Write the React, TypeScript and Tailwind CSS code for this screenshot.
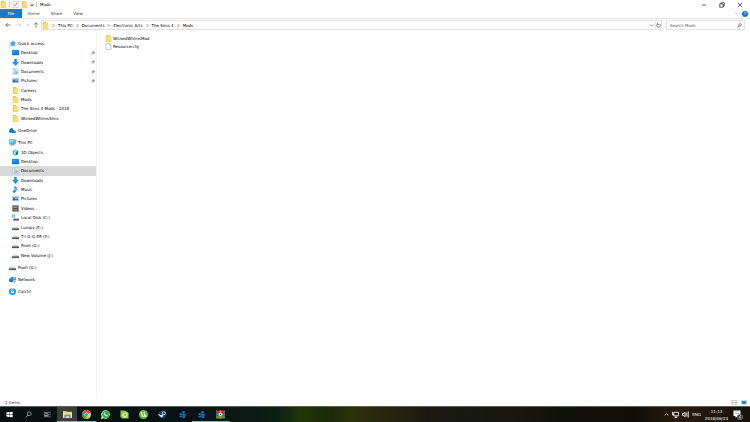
import type { ReactNode } from 'react'

type IconName =
  | 'star'
  | 'desktop'
  | 'download'
  | 'document'
  | 'pictures'
  | 'folder'
  | 'onedrive'
  | 'pc'
  | 'objects'
  | 'music'
  | 'videos'
  | 'osdisk'
  | 'drive'
  | 'network'
  | 'catch'
  | 'file'

interface NavItem {
  label: string
  icon: IconName
  pinned?: boolean
  selected?: boolean
}

const quickAccess: NavItem[] = [
  { label: 'Desktop', icon: 'desktop', pinned: true },
  { label: 'Downloads', icon: 'download', pinned: true },
  { label: 'Documents', icon: 'document', pinned: true },
  { label: 'Pictures', icon: 'pictures', pinned: true },
  { label: 'Careers', icon: 'folder' },
  { label: 'Mods', icon: 'folder' },
  { label: 'The Sims 4 Mods - 2018', icon: 'folder' },
  { label: 'WickedWhimsSims', icon: 'folder' },
]

const thisPc: NavItem[] = [
  { label: '3D Objects', icon: 'objects' },
  { label: 'Desktop', icon: 'desktop' },
  { label: 'Documents', icon: 'document', selected: true },
  { label: 'Downloads', icon: 'download' },
  { label: 'Music', icon: 'music' },
  { label: 'Pictures', icon: 'pictures' },
  { label: 'Videos', icon: 'videos' },
  { label: 'Local Disk (C:)', icon: 'osdisk' },
  { label: 'Lumpy (E:)', icon: 'drive' },
  { label: 'T-I-G-G-ER (F:)', icon: 'drive' },
  { label: 'Pooh (G:)', icon: 'drive' },
  { label: 'New Volume (J:)', icon: 'drive' },
]

const crumbs = ['This PC', 'Documents', 'Electronic Arts', 'The Sims 4', 'Mods']

const files: { name: string; icon: IconName }[] = [
  { name: 'WickedWhimsMod', icon: 'folder' },
  { name: 'Resource.cfg', icon: 'file' },
]

// All glyphs are drawn on a 16 x 16 grid.
const glyphs: Record<IconName, ReactNode> = {
  star: (
    <>
      <path d="M9 1l2 4.6 4.6.4-3.5 3.2 1 4.8L9 11.500l-4 2.500 1-4.800L3 6.200l4.300-.6z" fill="#2a9fe8" stroke="#2a9fe8" />
      <path d="M1 8h4M0 11h5M2 14h3" stroke="#6cc0f2" strokeWidth="1.5" />
    </>
  ),
  desktop: (
    <>
      <rect x="0" y="2" width="16" height="12" fill="#0a8de8" />
      <path d="M0 12h16v2H0z" fill="#0b6fc2" />
      <path d="M2 4h7L2 10z" fill="#35a9f5" />
    </>
  ),
  download: <path d="M5 0h6v7h5l-8 9-8-9h5z" fill="#2a92e2" />,
  document: (
    <>
      <path d="M2 1h9l3 3v11H2z" fill="#e9f4fb" stroke="#91b9d2" />
      <path d="M4 4h4M4 7h8M4 10h4M4 13h8" stroke="#69a8d2" strokeWidth="1.400" />
      <path d="M8 8h5v4H8z" fill="#6fb2df" />
    </>
  ),
  pictures: (
    <>
      <rect x="0.500" y="2.500" width="15" height="11" fill="#e4f2fc" stroke="#9aaeba" />
      <path d="M2 4h12v5H2z" fill="#6db6e8" />
      <path d="M2 12V8l3-2 4 4 3-2 2 2v2z" fill="#27659c" />
    </>
  ),
  folder: (
    <>
      <path d="M2 0h7l1 2h4v14H2z" fill="#f0c550" />
      <path d="M4 3h10v13H3z" fill="#fddb7a" />
      <path d="M2 15h12v1H2z" fill="#edc75a" />
    </>
  ),
  onedrive: (
    <>
      <path d="M1 12a3 3 0 0 1 1-5 4 4 0 0 1 4-4c2 0 3.500 1 4 3L6 8l-1 5H3z" fill="#0a63b8" />
      <path d="M6 13.500a2.500 2.500 0 0 1 0-5 4 4 0 0 1 7 0 2.500 2.500 0 0 1 .5 5z" fill="#1583dd" />
    </>
  ),
  pc: (
    <>
      <rect x="1" y="1.500" width="14" height="10" fill="#52bdf0" stroke="#6b8797" />
      <path d="M2 2.500h10L2 9z" fill="#9de0fa" />
      <path d="M3 13.500h10" stroke="#4588ae" strokeWidth="2" />
    </>
  ),
  objects: (
    <>
      <path d="M8 1l6 3v8l-6 3-6-3V4z" fill="#22b4d0" />
      <path d="M8 8l6-4v8l-6 3z" fill="#0c8097" />
      <path d="M2 4l6-3 6 3-6 4z" fill="#6edcea" />
      <path d="M5 7l4 2v4l-4-2z" fill="#e8fbff" />
    </>
  ),
  music: (
    <>
      <path d="M7 1v11M7 1c1 4 6 4 4 9" fill="none" stroke="#1b8be0" strokeWidth="2.600" />
      <ellipse cx="5" cy="12.500" rx="3.500" ry="3" fill="#1b8be0" />
    </>
  ),
  videos: (
    <>
      <rect x="1" y="1" width="14" height="14" fill="#454850" />
      <path d="M4 3h8v4H4z" fill="#8098c6" />
      <path d="M4 9h8v4H4z" fill="#a57e55" />
      <path d="M2.500 2v12M13.500 2v12" stroke="#d6d6d6" strokeDasharray="1.500 1.500" />
    </>
  ),
  osdisk: (
    <>
      <path d="M0 1h3v3H0zM4 1h3v3H4zM0 5h3v3H0zM4 5h3v3H4z" fill="#1fa9ea" />
      <path d="M4 9h10l2 2H3z" fill="#c9cdcf" />
      <path d="M3 11h13v4H3z" fill="#4e5759" />
    </>
  ),
  drive: (
    <>
      <path d="M3 6h10l3 4H0z" fill="#d3d6d6" />
      <path d="M0 10h16v4H0z" fill="#4b5150" />
      <path d="M2 12h4" stroke="#55c575" />
    </>
  ),
  network: (
    <>
      <rect x="5" y="2" width="11" height="8" fill="#2a9de0" />
      <rect x="9" y="3" width="6" height="4" fill="#8bd3f5" />
      <circle cx="5" cy="9" r="5" fill="#1874b9" />
      <path d="M1 8c3-3 5 3 8 0" stroke="#7dcbed" fill="none" />
      <path d="M7 13h8" stroke="#5a9ec4" strokeWidth="2" />
    </>
  ),
  catch: (
    <>
      <circle cx="8" cy="8" r="8" fill="#11a7e5" />
      <circle cx="8" cy="8.500" r="3.500" fill="#fff" />
      <path d="M6 0h4v5H6z" fill="#fff" />
      <path d="M8 3v6" stroke="#11a7e5" strokeWidth="2" />
    </>
  ),
  file: <path d="M2 1h8l4 4v10H2zM10 1v4h4" fill="#fff" stroke="#8e8e8e" />,
}

function Icon({ name }: { name: IconName }) {
  return (
    <svg viewBox="0 0 16 16" className="size-[7px] shrink-0" aria-hidden="true">
      {glyphs[name]}
    </svg>
  )
}

function Pin() {
  return (
    <svg viewBox="0 0 16 16" className="ml-auto size-1" aria-hidden="true">
      <path d="M9 1l6 6-3 1-3 5-6-6 5-3zM6 10l-5 5" fill="#8d99a2" stroke="#8d99a2" strokeWidth="2" />
    </svg>
  )
}

function NavRow({ item, root }: { item: NavItem; root?: boolean }) {
  return (
    <a
      href="#"
      aria-current={item.selected ? 'true' : undefined}
      className={`flex min-h-0 items-center gap-[2px] pr-px whitespace-nowrap ${root ? 'pl-[9px]' : 'pl-3'} ${
        item.selected ? 'bg-[#d9d9d9]' : ''
      }`}
    >
      <Icon name={item.icon} />
      <span>{item.label}</span>
      {item.pinned && <Pin />}
    </a>
  )
}

function SingleRow({ item }: { item: NavItem }) {
  return (
    <div className="grid h-[9px]">
      <NavRow item={item} root />
    </div>
  )
}

function Sidebar() {
  return (
    <nav aria-label="Folders" className="flex w-[97px] shrink-0 flex-col gap-[3px] border-r border-[#f3f3f3] pt-2">
      <div className="grid h-[84px] auto-rows-fr">
        <NavRow item={{ label: 'Quick access', icon: 'star' }} root />
        {quickAccess.map((item) => (
          <NavRow key={item.label} item={item} />
        ))}
      </div>
      <SingleRow item={{ label: 'OneDrive', icon: 'onedrive' }} />
      <div className="grid h-[122px] auto-rows-fr">
        <NavRow item={{ label: 'This PC', icon: 'pc' }} root />
        {thisPc.map((item) => (
          <NavRow key={item.label} item={item} />
        ))}
      </div>
      <SingleRow item={{ label: 'Pooh (G:)', icon: 'drive' }} />
      <SingleRow item={{ label: 'Network', icon: 'network' }} />
      <SingleRow item={{ label: 'Catch!', icon: 'catch' }} />
    </nav>
  )
}

function Stroke({ d, className = 'size-[6px]' }: { d: string; className?: string }) {
  return (
    <svg viewBox="0 0 16 16" className={className} fill="none" stroke="currentColor" strokeWidth="2" aria-hidden="true">
      <path d={d} />
    </svg>
  )
}

function TitleBar() {
  return (
    <header className="flex h-[9px] items-center">
      <Icon name="folder" />
      <span className="ml-[2px] h-[5px] w-px bg-[#c8c8c8]" />
      <button type="button" aria-label="Properties" className="ml-[2px]">
        <svg viewBox="0 0 16 16" className="size-[7px]" aria-hidden="true">
          <path d="M2 1h12v14H2z" fill="#fff" stroke="#a4a4a4" />
          <path d="M4 8l3 3 5-7" fill="none" stroke="#d0603c" strokeWidth="2" />
        </svg>
      </button>
      <button type="button" aria-label="New folder" className="ml-[2px]">
        <Icon name="folder" />
      </button>
      <button type="button" aria-label="Customize toolbar" className="ml-[2px]">
        <svg viewBox="0 0 16 16" className="size-1" aria-hidden="true">
          <path d="M3 3h10M2 7h12l-6 6z" fill="#444" stroke="#444" />
        </svg>
      </button>
      <span className="ml-[2px] h-[5px] w-px bg-[#c8c8c8]" />
      <h1 className="ml-[3px]">Mods</h1>
      <div className="ml-auto flex gap-3 pr-[7px] text-[#333]">
        <button type="button" aria-label="Minimize">
          <Stroke d="M2 8h12" />
        </button>
        <button type="button" aria-label="Restore">
          <Stroke d="M2 5h9v9H2zM5 5V2h9v9h-3" />
        </button>
        <button type="button" aria-label="Close">
          <Stroke d="M2 2l12 12M14 2L2 14" />
        </button>
      </div>
    </header>
  )
}

function RibbonTabs() {
  return (
    <div className="flex h-[10px] items-stretch border-b border-[#e8e8e8] text-[#333]">
      <button type="button" className="w-[22px] bg-[#1979ca] text-white">
        File
      </button>
      <button type="button" className="w-[23px]">
        Home
      </button>
      <button type="button" className="w-[23px]">
        Share
      </button>
      <button type="button" className="w-5">
        View
      </button>
      <div className="ml-auto flex items-center gap-[3px] pr-[2px]">
        <button type="button" aria-label="Expand ribbon" className="text-[#999]">
          <Stroke d="M3 5l5 5 5-5" className="size-[5px]" />
        </button>
        <button
          type="button"
          aria-label="Help"
          className="grid size-[6px] place-items-center rounded-full bg-[#0b78d0] leading-none text-white"
        >
          ?
        </button>
      </div>
    </div>
  )
}

function AddressBar() {
  return (
    <div className="flex h-3 items-center pr-[5px]">
      <div className="flex w-[41px] shrink-0 items-center pl-[5px] text-[#555]">
        <button type="button" aria-label="Back">
          <Stroke d="M15 8H2M7 3L2 8l5 5" />
        </button>
        <button type="button" aria-label="Forward" className="ml-[5px] text-[#ccc]">
          <Stroke d="M1 8h13M9 3l5 5-5 5" />
        </button>
        <button type="button" aria-label="Recent locations" className="ml-1">
          <Stroke d="M4 6l4 4 4-4" className="size-1" />
        </button>
        <button type="button" aria-label="Up" className="ml-[3px]">
          <Stroke d="M8 15V2M3 7l5-5 5 5" />
        </button>
      </div>
      <div className="flex h-[10px] min-w-0 flex-1 items-center border border-[#e2e2e2]">
        <Icon name="folder" />
        <ol className="flex items-center whitespace-nowrap">
          {crumbs.map((crumb) => (
            <li key={crumb} className="flex items-center">
              <Stroke d="M5 3l5 5-5 5" className="mx-[2px] size-[5px] text-[#555]" />
              <a href="#">{crumb}</a>
            </li>
          ))}
        </ol>
        <div className="ml-auto flex h-full items-center text-[#444]">
          <button type="button" aria-label="Previous locations" className="pr-px">
            <Stroke d="M3 5l5 5 5-5" className="size-[5px]" />
          </button>
          <button type="button" aria-label="Refresh" className="h-full border-l border-[#e8e8e8]">
            <Stroke d="M5 3a6 6 0 1 0 6 0M5 0v5h5" className="size-[5px]" />
          </button>
        </div>
      </div>
      <label className="ml-1 flex h-[10px] w-[79px] items-center border border-[#e2e2e2] pr-[2px] pl-[3px]">
        <input
          type="search"
          aria-label="Search Mods"
          placeholder="Search Mods"
          className="min-w-0 flex-1 outline-none placeholder:text-[#555]"
        />
        <Stroke d="M14 6a4 4 0 1 1-8 0 4 4 0 0 1 8 0zM7 9l-6 6" className="size-[5px] text-[#555]" />
      </label>
    </div>
  )
}

function StatusBar() {
  return (
    <footer className="flex h-2 shrink-0 items-center pr-[3px] pl-[5px] text-[#26354d]">
      <span>2 items</span>
      <div className="ml-auto flex gap-[3px]">
        <button type="button" aria-label="Details view">
          <svg viewBox="0 0 16 12" className="h-[5px] w-[7px]" aria-hidden="true">
            <path d="M0 2h6M0 6h6M0 10h6M8 2h7M8 6h7M8 10h7" stroke="#aaa" strokeWidth="2" />
          </svg>
        </button>
        <button type="button" aria-label="Large icons view">
          <svg viewBox="0 0 16 12" className="h-[5px] w-[6px]" aria-hidden="true">
            <path d="M0 0h16v12H0z" fill="#a9d5f3" />
            <path d="M3 3h10v6H3z" fill="#28679b" />
          </svg>
        </button>
      </div>
    </footer>
  )
}

const puzzle = (
  <>
    <rect width="20" height="20" fill="#02070d" />
    <path d="M10 2h5v6h-5zM3 7h6v4H3zM11 9h7v3h-7zM3 13h6v3H3zM10 13h6v5h-6z" fill="#0c79bd" />
    <path d="M8 4l4 4-5 3 6 3-3 3" stroke="#0b66a4" strokeWidth="2" fill="none" />
  </>
)

const apps: { name: string; art: ReactNode; system?: boolean; running?: boolean; active?: boolean }[] = [
  {
    name: 'Start',
    system: true,
    art: <path d="M1 4l8-1v6.500H1zM10 3l9-1v7.500h-9zM1 10.500h8V17l-8-1zM10 10.500h9V18l-9-1z" fill="#fff" />,
  },
  {
    name: 'Search',
    system: true,
    art: (
      <g fill="none" stroke="#d5d5d5" strokeWidth="1.800">
        <circle cx="12" cy="8" r="5.500" />
        <path d="M8.500 11.500L2 18" />
      </g>
    ),
  },
  {
    name: 'Task View',
    system: true,
    art: (
      <path
        d="M2 2v3h10V2M2 8h10v5H2zM2 18v-3h10v3M17 2v4M17 8v4M17 14v4"
        fill="none"
        stroke="#cfcfcf"
        strokeWidth="1.800"
      />
    ),
  },
  {
    name: 'File Explorer',
    running: true,
    active: true,
    art: (
      <>
        <path d="M0 2h7l2 2h11v14H0z" fill="#efc24b" />
        <path d="M0 6h20v12H0z" fill="#ffe394" />
        <path d="M3 10h14v8h-4v-4H7v4H3z" fill="#3ba6df" />
      </>
    ),
  },
  {
    name: 'Chrome',
    running: true,
    art: (
      <>
        <circle cx="10" cy="10" r="10" fill="#f7cb36" />
        <path d="M10 10L1.300 5A10 10 0 0 1 19 6z" fill="#df4636" />
        <path d="M10 10L1.300 5A10 10 0 0 0 9 20l4-7z" fill="#35a457" />
        <circle cx="10" cy="10" r="4.500" fill="#fff" />
        <circle cx="10" cy="10" r="3.500" fill="#4388ed" />
      </>
    ),
  },
  {
    name: 'WhatsApp',
    art: (
      <>
        <path d="M0 20l1.500-6A9.500 9.500 0 1 1 6 18.500z" fill="#e7f8e9" />
        <circle cx="10.400" cy="9.800" r="8" fill="#2bb741" />
        <path d="M7 5c-3 4 4 11 8 8l-2-2-1.500 1C10 11 9 10 8.500 8.500L9 7z" fill="#fff" />
      </>
    ),
  },
  {
    name: 'Limewire',
    art: (
      <>
        <path d="M1 1h10l8 5v13H4L1 14z" fill="#8cc63c" />
        <circle cx="11" cy="11" r="6" fill="#e5f2bd" />
        <path d="M11 11V5M11 11l5-3M11 11l4 4M11 11l-4 4M11 11L6 8" stroke="#7eb52b" strokeWidth="1.500" />
      </>
    ),
  },
  {
    name: 'uTorrent',
    art: (
      <>
        <circle cx="10" cy="10" r="10" fill="#66b83c" />
        <path d="M5 4l2 8c1 3 5 3 6 0l-2-8M13 11c0 3 2 3 4 2" fill="none" stroke="#fff" strokeWidth="2.600" />
      </>
    ),
  },
  {
    name: 'Steam',
    art: (
      <>
        <circle cx="10" cy="10" r="9" fill="#14386c" />
        <path d="M1 10l7 4 5-6" fill="none" stroke="#dfe8f0" strokeWidth="2.500" />
        <circle cx="13" cy="7" r="3.500" fill="#14386c" stroke="#fff" strokeWidth="1.600" />
        <circle cx="8" cy="14" r="2.500" fill="#fff" />
      </>
    ),
  },
  { name: 'Launcher', art: puzzle },
  { name: 'Launcher window', art: puzzle, running: true },
  {
    name: 'WinRAR',
    running: true,
    art: (
      <>
        <path d="M0 1h20v6H0z" fill="#a8404a" />
        <path d="M0 7h20v6H0z" fill="#4b6fc4" />
        <path d="M0 13h20v6H0z" fill="#4f8f45" />
        <path d="M0 5h3v3H0zM17 5h3v3h-3zM0 12h3v2H0zM17 12h3v2h-3z" fill="#7c4660" />
        <path d="M8 1h4v18H8z" fill="#c98a3c" />
        <path d="M6 7h8v6H6z" fill="#f0c56b" />
        <path d="M9 9h2v2H9z" fill="#754b20" />
      </>
    ),
  },
]

function Taskbar() {
  return (
    <div className="flex h-4 shrink-0 justify-between border-t border-[#586057] bg-[linear-gradient(90deg,#07100f_0%,#081412_25%,#0a1b16_34%,#0c2013_37%,#213606_40%,#1d2b09_44%,#2d310c_47%,#28250f_52%,#1b1a12_57%,#181815_63%,#18180f_68%,#10100c_77%,#130f07_85%,#281c0e_90%,#17110c_100%)] text-white">
      <div className="grid w-[230px] grid-cols-12">
        {apps.map((app) => (
          <button
            key={app.name}
            type="button"
            aria-label={app.name}
            className={`flex items-center justify-center border-b ${app.running ? 'border-[#79b4b3]' : 'border-transparent'} ${
              app.active ? 'bg-[#353f3d]' : ''
            }`}
          >
            <svg viewBox="0 0 20 20" className={app.system ? 'size-[7px]' : 'size-[9px]'} aria-hidden="true">
              {app.art}
            </svg>
          </button>
        ))}
      </div>
      <div className="flex items-center gap-[3px] pr-[7px]">
        <button type="button" aria-label="Show hidden icons">
          <Stroke d="M2 11l6-6 6 6" className="size-[5px]" />
        </button>
        <button type="button" aria-label="Network">
          <Stroke d="M4 3h11v8H4zM9 11v4M6 15h6M1 2v7h3" className="size-[7px]" />
        </button>
        <button type="button" aria-label="Volume">
          <Stroke d="M1 6h2l4-3v10l-4-3H1zM9 5c2 2 2 4 0 6M11 3c4 3 4 7 0 10M14 1c3 4 3 10 0 14" className="size-[7px]" />
        </button>
        <span>ENG</span>
        <div className="ml-px text-center">
          <div>11:13</div>
          <div>2018/06/23</div>
        </div>
        <button type="button" aria-label="Notifications" className="ml-[2px]">
          <svg viewBox="0 0 20 20" className="size-[10px]" aria-hidden="true">
            <path d="M1 1h14v11H9l-4 4v-4H1z" fill="#fff" />
            <path d="M3 4h10M3 7h10" stroke="#888" />
            <circle cx="14" cy="14" r="5.500" fill="#30343a" stroke="#aaa" />
            <path d="M16 11c-4 0-5 5-2 6 3-1 2-4-1-3" fill="none" stroke="#fff" />
          </svg>
        </button>
      </div>
    </div>
  )
}

function App() {
  return (
    <div className="flex h-screen flex-col overflow-hidden bg-white font-['DejaVu_Sans','Open_Sans',sans-serif] text-[4px] leading-[7px] text-black">
      <TitleBar />
      <RibbonTabs />
      <AddressBar />
      <div className="flex min-h-0 flex-1">
        <Sidebar />
        <main className="flex-1 pt-[3px] pl-2">
          <ul>
            {files.map((file) => (
              <li key={file.name}>
                <a href="#" className="flex h-2 items-center gap-px">
                  <Icon name={file.icon} />
                  {file.name}
                </a>
              </li>
            ))}
          </ul>
        </main>
      </div>
      <StatusBar />
      <Taskbar />
    </div>
  )
}

export default App
